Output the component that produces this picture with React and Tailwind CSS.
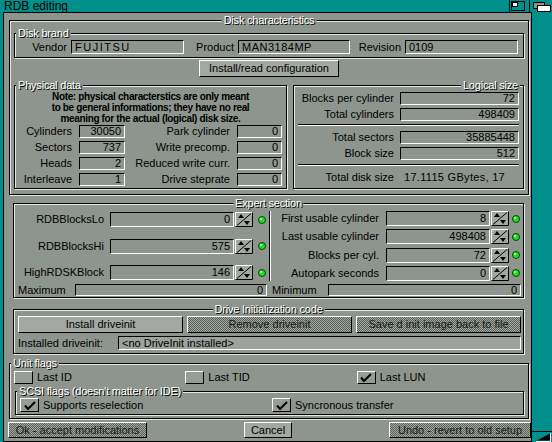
import React from "react";

// Amiga MUI style "RDB editing" window

function Group({ title, align = "left", className = "", children }) {
  let pos = "left-[1px]";
  if (align === "center") pos = "left-1/2 -translate-x-1/2";
  if (align === "right") pos = "right-[3px]";
  return (
    <div className={`relative shrink-0 border border-black shadow-[inset_1px_1px_0_#e6e9e6,1px_1px_0_#e6e9e6] ${className}`}>
      {title && (
        <span
          className={`absolute -top-[7px] ${pos} whitespace-nowrap bg-[#8e958e] px-[2px] text-[11px] leading-[12px] tracking-[-0.2px] text-white [text-shadow:1px_1px_0_#000]`}
        >
          {title}
        </span>
      )}
      {children}
    </div>
  );
}

function Field({ children, left, className = "" }) {
  return (
    <div
      className={`flex shrink-0 items-center overflow-hidden whitespace-nowrap border border-t-black border-l-black border-b-white border-r-white px-[3px] text-[11px] leading-none text-black ${left ? "justify-start" : "justify-end"} ${className}`}
    >
      {children}
    </div>
  );
}

function Btn({ children, disabled, className = "" }) {
  return (
    <button
      type="button"
      className={`flex shrink-0 items-center justify-center whitespace-nowrap border border-t-white border-l-white border-b-black border-r-black text-[11px] leading-none ${
        disabled
          ? "bg-[image:repeating-conic-gradient(#596059_0_25%,#a3a8a3_0_50%)] bg-[length:2px_2px] text-[#161816]"
          : "bg-[#a3a8a3] text-black"
      } ${className}`}
    >
      {children}
    </button>
  );
}

function Spin() {
  return (
    <svg width="18" height="15" viewBox="0 0 18 15" className="shrink-0">
      <rect x="0" y="0" width="18" height="15" fill="#a3a8a3" />
      <path d="M0.5 14.5V0.5H17.5" stroke="#fff" fill="none" />
      <path d="M17.5 0.5V14.5H0.5" stroke="#000" fill="none" />
      <path d="M2 13.5L16 1.5" stroke="#000" />
      <path d="M3 6L6 2L9 6Z" fill="#000" />
      <path d="M9 9H15L12 13Z" fill="#000" />
    </svg>
  );
}

function Led() {
  return (
    <svg width="8" height="8" viewBox="0 0 8 8" className="shrink-0">
      <circle cx="4" cy="4" r="3.5" fill="#22dd22" stroke="#104010" />
      <circle cx="3" cy="3" r="1" fill="#b8ffb8" />
    </svg>
  );
}

function Check({ checked, className = "" }) {
  return (
    <span
      className={`flex w-[19px] shrink-0 items-center justify-center border border-t-white border-l-white border-b-black border-r-black bg-[#969c96] ${className}`}
    >
      {checked && (
        <svg width="12" height="9" viewBox="0 0 12 9">
          <path d="M1 4.5L4 8L11 1" stroke="#000" strokeWidth="2" fill="none" />
        </svg>
      )}
    </span>
  );
}

function ExpertRow({ label, value, labelW, fieldW, ledGap }) {
  return (
    <div className="flex h-[15px] items-center">
      <span className={`${labelW} text-right text-[11px] leading-none`}>{label}</span>
      <Field className={`${fieldW} h-[15px]`}>{value}</Field>
      <span className="ml-[1px]">
        <Spin />
      </span>
      <span className={`${ledGap} flex`}>
        <Led />
      </span>
    </div>
  );
}

function LogicalRow({ label, value }) {
  return (
    <div className="flex h-[13px] items-center">
      <span className="w-[106px] pr-[6px] text-right text-[11px] leading-none">{label}</span>
      <Field className="h-[13px] w-[119px]">{value}</Field>
    </div>
  );
}

const physical = [
  ["Cylinders", "30050", "Park cylinder", "0"],
  ["Sectors", "737", "Write precomp.", "0"],
  ["Heads", "2", "Reduced write curr.", "0"],
  ["Interleave", "1", "Drive steprate", "0"],
];

export default function App() {
  return (
    <div className="flex h-[442px] w-[552px] flex-col overflow-hidden bg-[#008f8a] font-['Liberation_Sans',Arial,sans-serif] text-black">
      {/* title bar */}
      <div className="flex h-[12px] shrink-0 items-center">
        <span className="pl-[4px] text-[12px] leading-[12px]">RDB editing</span>
        <svg className="ml-auto" width="44" height="12" viewBox="0 0 44 12">
          <path d="M1.5 0V12M21.5 0V12" stroke="#000" />
          <rect x="3.5" y="1.5" width="13" height="9" fill="none" stroke="#000" />
          <rect x="4.5" y="2.5" width="5" height="4" fill="#fff" stroke="#000" />
          <rect x="25.5" y="2.5" width="11" height="6" fill="#8e958e" stroke="#000" />
          <rect x="29.5" y="5.5" width="13" height="6" fill="#fff" stroke="#000" />
        </svg>
      </div>

      <div className="flex min-h-0 flex-1">
        <div className="w-[3px] shrink-0" />
        <div className="flex w-[529px] shrink-0 flex-col items-start border border-black bg-[#8e958e]">
          {/* Disk characteristics */}
          <Group title="Disk characteristics" align="center" className="ml-[5px] mt-[7px] h-[175px] w-[520px]">
            <Group title="Disk brand" className="ml-[4px] mt-[12px] h-[25px] w-[510px]">
              <div className="flex items-center pt-[6px]">
                <span className="w-[52px] text-right text-[11px] leading-none">Vendor</span>
                <Field left className="ml-[4px] h-[14px] w-[113px] tracking-[1.5px]">FUJITSU</Field>
                <span className="w-[50px] text-right text-[11px] leading-none">Product</span>
                <Field left className="ml-[4px] h-[14px] w-[112px] tracking-[0.5px]">MAN3184MP</Field>
                <span className="w-[51px] text-right text-[11px] leading-none">Revision</span>
                <Field left className="ml-[4px] h-[14px] w-[113px]">0109</Field>
              </div>
            </Group>

            <div className="mt-[2px] flex justify-center">
              <Btn className="h-[17px] w-[140px]">Install/read configuration</Btn>
            </div>

            <div className="ml-[4px] mt-[8px] flex gap-[6px]">
              <Group title="Physical data" className="h-[104px] w-[273px]">
                <p className="mt-[5px] text-center text-[10px] font-bold leading-[11px] tracking-[-0.35px]">
                  Note: physical characterstics are only meant
                  <br />
                  to be general informations; they have no real
                  <br />
                  meaning for the actual (logical) disk size.
                </p>
                <div className="mt-[1px] grid grid-cols-[64px_46px_112px_45px] gap-y-[3px]">
                  {physical.map(([l1, v1, l2, v2]) => (
                    <React.Fragment key={l1}>
                      <span className="flex h-[13px] items-center justify-end pr-[7px] text-[11px] leading-none">{l1}</span>
                      <Field className="h-[13px]">{v1}</Field>
                      <span className="flex h-[13px] items-center justify-end pr-[7px] text-[11px] leading-none">{l2}</span>
                      <Field className="h-[13px]">{v2}</Field>
                    </React.Fragment>
                  ))}
                </div>
              </Group>

              <Group title="Logical size" align="right" className="flex h-[104px] w-[231px] flex-col">
                <div className="flex flex-1 flex-col pt-[6px]">
                  <LogicalRow label="Blocks per cylinder" value="72" />
                  <div className="mt-[3px]">
                    <LogicalRow label="Total cylinders" value="498409" />
                  </div>
                  <div className="ml-[4px] mt-[3px] h-[2px] w-[221px] border-t border-b border-t-black border-b-white" />
                  <div className="mt-[5px]">
                    <LogicalRow label="Total sectors" value="35885448" />
                  </div>
                  <div className="mt-[3px]">
                    <LogicalRow label="Block size" value="512" />
                  </div>
                  <div className="ml-[4px] mt-[4px] h-[2px] w-[221px] border-t border-b border-t-black border-b-white" />
                  <div className="flex flex-1 items-center overflow-hidden whitespace-nowrap text-[11px] leading-none">
                    <span className="w-[106px] shrink-0 pr-[6px] text-right">Total disk size</span>
                    <span className="ml-[4px] w-[114px] overflow-hidden tracking-[0.3px]">17.1115 GBytes, 17</span>
                  </div>
                </div>
              </Group>
            </div>
          </Group>

          {/* Expert section */}
          <Group title="Expert section" align="center" className="ml-[9px] mt-[8px] h-[95px] w-[511px]">
            <div className="mt-[7px] flex h-[70px]">
              <div className="flex w-[255px] flex-col justify-between py-[1px]">
                <ExpertRow label="RDBBlocksLo" value="0" labelW="w-[96px] pr-[6px]" fieldW="w-[124px]" ledGap="ml-[5px]" />
                <ExpertRow label="RDBBlocksHi" value="575" labelW="w-[96px] pr-[6px]" fieldW="w-[124px]" ledGap="ml-[5px]" />
                <ExpertRow label="HighRDSKBlock" value="146" labelW="w-[96px] pr-[6px]" fieldW="w-[124px]" ledGap="ml-[5px]" />
              </div>
              <div className="w-[2px] border-l border-r border-l-black border-r-white" />
              <div className="flex w-[252px] flex-col justify-between">
                <ExpertRow label="First usable cylinder" value="8" labelW="w-[115px] pr-[7px]" fieldW="w-[104px]" ledGap="ml-[3px]" />
                <ExpertRow label="Last usable cylinder" value="498408" labelW="w-[115px] pr-[7px]" fieldW="w-[104px]" ledGap="ml-[3px]" />
                <ExpertRow label="Blocks per cyl." value="72" labelW="w-[115px] pr-[7px]" fieldW="w-[104px]" ledGap="ml-[3px]" />
                <ExpertRow label="Autopark seconds" value="0" labelW="w-[115px] pr-[7px]" fieldW="w-[104px]" ledGap="ml-[3px]" />
              </div>
            </div>
            <div className="mt-[3px] flex h-[12px] items-center text-[11px] leading-none">
              <span className="w-[61px] pl-[4px]">Maximum</span>
              <Field className="h-[12px] w-[192px]">0</Field>
              <span className="w-[5px]" />
              <span className="w-[56px]">Minimum</span>
              <Field className="h-[12px] w-[193px]">0</Field>
            </div>
          </Group>

          {/* Drive Initialization code */}
          <Group title="Drive Initialization code" align="center" className="ml-[9px] mt-[11px] h-[45px] w-[511px]">
            <div className="mt-[6px] flex gap-[4px] pl-[4px]">
              <Btn className="h-[17px] w-[165px]">Install driveinit</Btn>
              <Btn disabled className="h-[17px] w-[165px]">Remove driveinit</Btn>
              <Btn disabled className="h-[17px] w-[165px]">Save d init image back to file</Btn>
            </div>
            <div className="mt-[3px] flex h-[14px] items-center">
              <span className="w-[104px] pl-[4px] text-[11px] leading-none">Installed driveinit:</span>
              <Field left className="h-[14px] w-[403px] bg-[#9da29d]">&lt;no DriveInit installed&gt;</Field>
            </div>
          </Group>

          {/* Unit flags */}
          <Group title="Unit flags" className="ml-[5px] mt-[9px] h-[56px] w-[520px]">
            <div className="mt-[7px] flex pl-[4px]">
              {[
                ["Last ID", false],
                ["Last TID", false],
                ["Last LUN", true],
              ].map(([label, on]) => (
                <div key={label} className="flex w-[172px] items-center">
                  <Check checked={on} className="h-[13px]" />
                  <span className="ml-[4px] text-[11px] leading-none">{label}</span>
                </div>
              ))}
            </div>
            <Group title="SCSI flags (doesn't matter for IDE)" className="ml-[5px] mt-[7px] h-[24px] w-[509px]">
              <div className="mt-[6px] flex pl-[4px]">
                <div className="flex w-[252px] items-center">
                  <Check checked className="h-[14px]" />
                  <span className="ml-[4px] text-[11px] leading-none">Supports reselection</span>
                </div>
                <div className="flex items-center">
                  <Check checked className="h-[14px]" />
                  <span className="ml-[4px] text-[11px] leading-none">Syncronous transfer</span>
                </div>
              </div>
            </Group>
          </Group>

          {/* bottom buttons */}
          <div className="mt-[3px] flex h-[16px] w-full justify-between pl-[4px]">
            <Btn disabled className="h-[16px] w-[139px]">Ok - accept modifications</Btn>
            <Btn className="h-[16px] w-[48px]">Cancel</Btn>
            <Btn disabled className="h-[16px] w-[142px]">Undo - revert to old setup</Btn>
          </div>
        </div>

        {/* right border with size gadget */}
        <div className="flex flex-1 flex-col justify-end">
          <svg width="20" height="11" viewBox="0 0 20 11">
            <path d="M0 0.5H20" stroke="#000" />
            <path d="M5 9.5L18 2.5V9.5Z" fill="#000" />
            <path d="M18.5 2V10.5H4" stroke="#fff" fill="none" />
          </svg>
        </div>
      </div>
    </div>
  );
}
